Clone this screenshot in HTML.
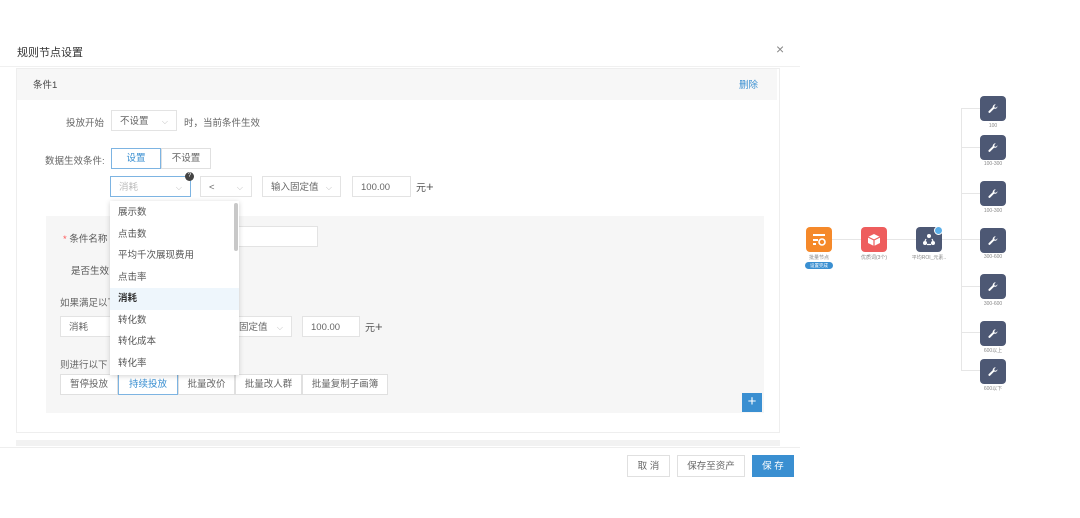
<!DOCTYPE html>
<html><head><meta charset="utf-8"><style>
*{box-sizing:border-box;margin:0;padding:0}
body{width:1080px;height:518px;background:#fff;position:relative;overflow:hidden;font-family:"Liberation Sans","Noto Sans CJK SC",sans-serif;font-size:10px;color:#555}
.a{position:absolute}
.box{position:absolute;border:1px solid #e3e3e3;background:#fff;height:21px;line-height:21px;padding-left:8px;color:#666;font-size:9.5px}
.car{position:absolute;right:8px;top:0;color:#bbb;font-size:8px}
.btn{position:absolute;border:1px solid #e0e0e0;background:#fff;height:21px;line-height:20px;text-align:center;font-size:9.5px;color:#666}
.dd div{height:21.5px;line-height:21.5px;padding-left:8px;font-size:9.5px;color:#555}
.n{position:absolute;width:26px;height:25px;border-radius:4px;background:#4d5874;display:flex;align-items:center;justify-content:center}
.nl{position:absolute;font-size:5px;color:#888;width:40px;text-align:center}
.ln{position:absolute;background:#e6e6e6}
</style></head><body>
<svg width="0" height="0" style="position:absolute"><defs><symbol id="w" viewBox="0 0 24 24"><path d="M21 6.5a5 5 0 0 1-6.8 4.7L6 19.4a2 2 0 0 1-2.8-2.8l8.2-8.2A5 5 0 0 1 17.5 3l-3 3 .5 3 3 .5 3-3z" fill="#fff"/></symbol></defs></svg>
<div class="a" style="left:17px;top:44px;font-size:11px;color:#333">规则节点设置</div>
<div class="a" style="left:776px;top:41px;font-size:14px;color:#888">×</div>
<div class="a" style="left:0;top:66px;width:800px;height:1px;background:#f0f0f0"></div>
<div class="a" style="left:16px;top:68px;width:764px;height:365px;border:1px solid #eee;background:#fff"></div>
<div class="a" style="left:17px;top:69px;width:760px;height:31px;background:#f7f7f7"></div>
<div class="a" style="left:33px;top:77px;font-size:9.5px;color:#444">条件1</div>
<div class="a" style="left:739px;top:77px;font-size:9.5px;color:#3a8fd1">删除</div>

<div class="a" style="left:66px;top:115px;font-size:9.5px;color:#666">投放开始</div>
<div class="box" style="left:111px;top:110px;width:66px">不设置<span class="car">⌵</span></div>
<div class="a" style="left:184px;top:115px;font-size:9.5px;color:#666">时，当前条件生效</div>

<div class="a" style="left:45px;top:153px;font-size:9.5px;color:#666">数据生效条件:</div>
<div class="btn" style="left:111px;top:148px;width:50px;border-color:#7db4e2;color:#3a8fd1">设置</div>
<div class="btn" style="left:161px;top:148px;width:50px">不设置</div>

<div class="box" style="left:110px;top:176px;width:81px;border-color:#7db4e2;color:#bbb">消耗<span class="car">⌵</span></div>
<div class="a" style="left:185px;top:172px;width:9px;height:9px;border-radius:50%;background:#444;color:#fff;font-size:6px;line-height:9px;text-align:center">?</div>
<div class="box" style="left:200px;top:176px;width:52px">&lt;<span class="car">⌵</span></div>
<div class="box" style="left:262px;top:176px;width:79px">输入固定值<span class="car">⌵</span></div>
<div class="box" style="left:352px;top:176px;width:59px">100.00</div>
<div class="a" style="left:416px;top:179px;font-size:10px;color:#555">元<b style="font-size:13px;font-weight:normal;line-height:10px">+</b></div>

<div class="a" style="left:46px;top:216px;width:718px;height:197px;background:#f6f6f6"></div>
<div class="a" style="left:63px;top:231px;font-size:9.5px;color:#555"><span style="color:#f55">*</span> 条件名称</div>
<div class="box" style="left:230px;top:226px;width:88px"></div>
<div class="a" style="left:71px;top:263px;font-size:9.5px;color:#555">是否生效</div>
<div class="a" style="left:60px;top:295px;font-size:9.5px;color:#666">如果满足以下</div>
<div class="box" style="left:60px;top:316px;width:60px">消耗</div>
<div class="box" style="left:230px;top:316px;width:62px;padding-left:8px">固定值<span class="car">⌵</span></div>
<div class="box" style="left:302px;top:316px;width:58px">100.00</div>
<div class="a" style="left:365px;top:319px;font-size:10px;color:#555">元<b style="font-size:13px;font-weight:normal;line-height:10px">+</b></div>
<div class="a" style="left:60px;top:357px;font-size:9.5px;color:#666">则进行以下</div>
<div class="btn" style="left:60px;top:374px;width:58px">暂停投放</div>
<div class="btn" style="left:118px;top:374px;width:60px;border-color:#7db4e2;color:#3a8fd1">持续投放</div>
<div class="btn" style="left:178px;top:374px;width:57px">批量改价</div>
<div class="btn" style="left:235px;top:374px;width:67px">批量改人群</div>
<div class="btn" style="left:302px;top:374px;width:86px">批量复制子画簿</div>
<div class="a" style="left:742px;top:393px;width:20px;height:19px;background:#3a8fd1;color:#fff;font-size:15px;line-height:18px;text-align:center">+</div>

<div class="a dd" style="left:110px;top:201px;width:129px;height:174px;background:#fff;box-shadow:0 1px 5px rgba(0,0,0,.18);padding-top:1px">
<div>展示数</div><div>点击数</div><div>平均千次展现费用</div><div>点击率</div><div style="background:#eef6fc;color:#333;font-weight:bold">消耗</div><div>转化数</div><div>转化成本</div><div>转化率</div>
<span class="a" style="left:124px;top:2px;width:4px;height:48px;background:#c8c8c8;border-radius:2px"></span>
</div>

<div class="a" style="left:16px;top:440px;width:764px;height:6px;background:#f2f2f2"></div>
<div class="a" style="left:0;top:447px;width:800px;height:1px;background:#eee"></div>
<div class="btn" style="left:627px;top:455px;width:43px;height:22px;line-height:21px">取 消</div>
<div class="btn" style="left:677px;top:455px;width:68px;height:22px;line-height:21px">保存至资产</div>
<div class="btn" style="left:752px;top:455px;width:42px;height:22px;line-height:21px;background:#3a8fd1;border-color:#3a8fd1;color:#fff">保 存</div>

<!-- flow -->
<div class="ln" style="left:832px;top:239px;width:130px;height:1px"></div>
<div class="ln" style="left:961px;top:108px;width:1px;height:262px"></div>
<div class="ln" style="left:961px;top:108px;width:20px;height:1px"></div>
<div class="ln" style="left:961px;top:147px;width:20px;height:1px"></div>
<div class="ln" style="left:961px;top:193px;width:20px;height:1px"></div>
<div class="ln" style="left:961px;top:239px;width:20px;height:1px"></div>
<div class="ln" style="left:961px;top:286px;width:20px;height:1px"></div>
<div class="ln" style="left:961px;top:332px;width:20px;height:1px"></div>
<div class="ln" style="left:961px;top:370px;width:20px;height:1px"></div>

<div class="n" style="left:806px;top:227px;background:#f5892a"><svg width="14" height="14" viewBox="0 0 14 14"><rect x="1" y="1" width="12" height="2" fill="#fff"/><rect x="1" y="6" width="5" height="2" fill="#fff"/><rect x="1" y="10" width="3" height="2" fill="#fff"/><circle cx="10" cy="9" r="3" fill="none" stroke="#fff" stroke-width="1.6"/></svg></div>
<div class="nl" style="left:799px;top:254px">批量节点</div>
<div class="a" style="left:805px;top:262px;width:28px;height:7px;border-radius:4px;background:#3a8fd1;color:#fff;font-size:4.5px;text-align:center;line-height:7px">设置完成</div>
<div class="n" style="left:861px;top:227px;background:#ee5d5d"><svg width="14" height="14" viewBox="0 0 14 14"><path d="M7 1 13 4 13 10 7 13 1 10 1 4Z" fill="#fff"/><path d="M1 4 7 7 13 4M7 7V13" stroke="#ee5d5d" stroke-width="1.2" fill="none"/></svg></div>
<div class="nl" style="left:854px;top:254px">优质词(3个)</div>
<div class="n" style="left:916px;top:227px"><svg width="14" height="14" viewBox="0 0 14 14"><circle cx="7" cy="3" r="2" fill="#fff"/><circle cx="3" cy="10" r="2" fill="#fff"/><circle cx="11" cy="10" r="2" fill="#fff"/><path d="M4 6 3 8M10 6 11 8M5 11.5H9" stroke="#fff" stroke-width="1.2"/></svg></div>
<div class="a" style="left:934px;top:226px;width:9px;height:9px;border-radius:50%;background:#5aaee8;border:1.5px solid #fff"></div>
<div class="nl" style="left:909px;top:254px">平均ROI_元素..</div>

<div class="n" style="left:980px;top:96px"><svg width="12" height="12"><use href="#w"/></svg></div><div class="nl" style="left:973px;top:123px">100</div>
<div class="n" style="left:980px;top:135px"><svg width="12" height="12"><use href="#w"/></svg></div><div class="nl" style="left:973px;top:161px">100-300</div>
<div class="n" style="left:980px;top:181px"><svg width="12" height="12"><use href="#w"/></svg></div><div class="nl" style="left:973px;top:208px">100-300</div>
<div class="n" style="left:980px;top:228px"><svg width="12" height="12"><use href="#w"/></svg></div><div class="nl" style="left:973px;top:254px">300-600</div>
<div class="n" style="left:980px;top:274px"><svg width="12" height="12"><use href="#w"/></svg></div><div class="nl" style="left:973px;top:301px">300-600</div>
<div class="n" style="left:980px;top:321px"><svg width="12" height="12"><use href="#w"/></svg></div><div class="nl" style="left:973px;top:347px">600以上</div>
<div class="n" style="left:980px;top:359px"><svg width="12" height="12"><use href="#w"/></svg></div><div class="nl" style="left:973px;top:385px">600以下</div>
</body></html>
